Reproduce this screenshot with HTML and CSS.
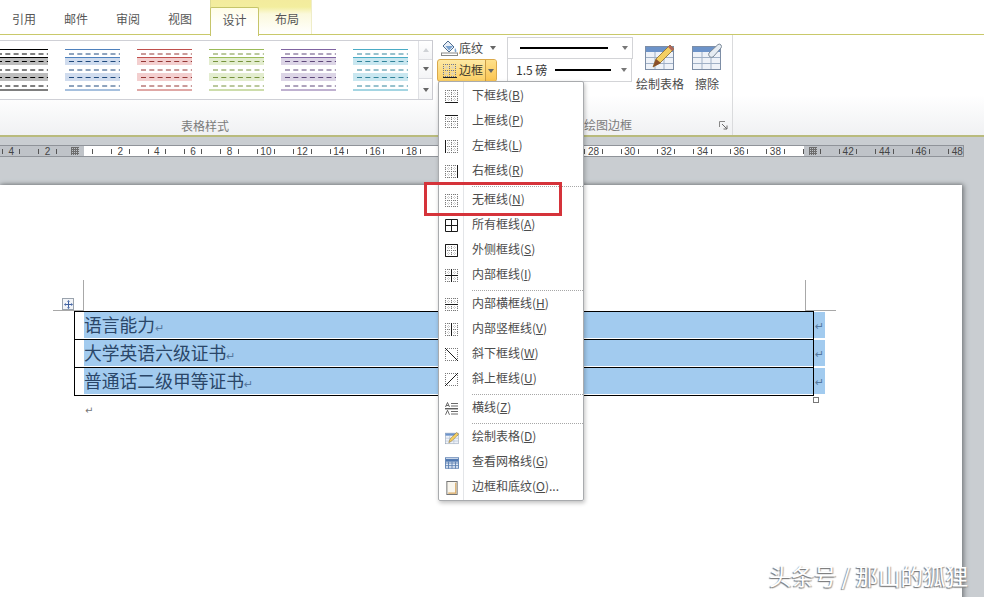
FILE: index.html
```html
<!DOCTYPE html>
<html lang="zh-CN">
<head>
<meta charset="utf-8">
<title>表格工具 - 边框</title>
<link rel="stylesheet" href="styles.css">
</head>
<body>
<svg class="defs" width="0" height="0" aria-hidden="true">
  <defs>
    <symbol id="thumb" viewBox="0 0 55 42">
      <rect class="band" x="0" y="8" width="55" height="8"/>
      <rect class="band" x="0" y="24" width="55" height="8"/>
      <path class="rule" d="M0 .5H55M0 8.5H55M0 41H55"/>
      <path class="dash" d="M4 5H55M4 12.5H55M4 21H55M4 28.5H55M4 37H55"/>
    </symbol>
    <symbol id="grid" viewBox="0 0 13 13">
      <path class="dots" d="M0 .5H13M0 6.500H13M0 12.500H13M.5 0V13M6.500 0V13M12.500 0V13"/>
      <path class="dots dots-faint" d="M0 3.500H13M0 9.500H13M3.500 0V13M9.500 0V13"/>
    </symbol>
    <symbol id="tableicon" viewBox="0 0 30 28">
      <rect x=".5" y="3.5" width="28" height="23" fill="#eef2f8" stroke="#7d8ea6"/>
      <rect x="1" y="4" width="27" height="5" fill="#6c93c9"/>
      <path d="M10 9V26M19 9V26M1 14.5H28M1 20.5H28" stroke="#9fb0c6" fill="none"/>
    </symbol>
  </defs>
</svg>

<header class="tabs">
  <div class="tab">引用</div>
  <div class="tab">邮件</div>
  <div class="tab">审阅</div>
  <div class="tab">视图</div>
  <div class="context">
    <div class="tab tab-active">设计</div>
    <div class="tab tab-last">布局</div>
  </div>
</header>

<section class="ribbon">
  <div class="group group-styles">
    <div class="gallery">
      <div class="thumbs">
        <svg class="thumb t-black"><use href="#thumb"/></svg>
        <svg class="thumb t-blue"><use href="#thumb"/></svg>
        <svg class="thumb t-red"><use href="#thumb"/></svg>
        <svg class="thumb t-green"><use href="#thumb"/></svg>
        <svg class="thumb t-purple"><use href="#thumb"/></svg>
        <svg class="thumb t-cyan"><use href="#thumb"/></svg>
      </div>
      <div class="scroller">
        <div class="scroll-btn"><span class="tri tri-faint"></span></div>
        <div class="scroll-btn"><span class="tri"></span></div>
        <div class="scroll-btn scroll-more"><span class="tri"></span></div>
      </div>
    </div>
    <div class="group-label">表格样式</div>
  </div>

  <div class="group group-draw">
    <div class="draw-top">
      <div class="col-format">
        <div class="fmt-row">
          <svg class="fmt-icon" viewBox="0 0 17 16">
            <path d="M7 1l6 6-5 5-6-6z" fill="#e8eef6" stroke="#4d6c8f"/>
            <path d="M4.500 6h7.500l-4 4.500z" fill="#7aa3d0"/>
            <path d="M14 8c1 1.500 2 3 1 4s-2-1-1-4z" fill="#7aa3d0"/>
            <rect x=".5" y="13" width="16" height="2.500" fill="#fff" stroke="#888"/>
          </svg>
          <span>底纹</span>
          <span class="tri tri-fmt"></span>
        </div>
        <div class="border-btn">
          <svg class="bd-icon" viewBox="0 0 14 14"><use href="#grid" width="13" height="13"/><path d="M0 13.500H14" stroke="#222" fill="none"/></svg>
          <span>边框</span>
          <span class="border-split"><span class="tri"></span></span>
        </div>
      </div>
      <div class="col-lines">
        <div class="line-box">
          <span class="line line-long"></span>
          <span class="tri"></span>
        </div>
        <div class="line-box line-box-weight">
          <span class="weight">1.5 磅</span>
          <span class="line line-short"></span>
          <span class="tri"></span>
        </div>
      </div>
      <div class="big-btn big-draw">
        <svg class="big-icon" viewBox="0 0 30 28">
          <use href="#tableicon" width="30" height="28"/>
          <path d="M8 24l3-8L25 2l4 4-14 14z" fill="#f4cf62" stroke="#8a6a2a" stroke-width=".8"/>
          <path d="M25 2l4 4-2 2-4-4z" fill="#b0675f"/>
          <path d="M8 24l3-8 5 4z" fill="#8a4f2a"/>
        </svg>
        <span>绘制表格</span>
      </div>
      <div class="big-btn big-erase">
        <svg class="big-icon" viewBox="0 0 30 28">
          <use href="#tableicon" width="30" height="28"/>
          <path d="M17 10L26 1.500q2-1 3 .5t0 3L21 14q-2 1-3.500-.5T17 10z" fill="#e6ecf2" stroke="#7c8a99"/>
        </svg>
        <span>擦除</span>
      </div>
    </div>
    <div class="draw-foot">
      <span class="group-label-inline">绘图边框</span>
      <svg class="launcher" viewBox="0 0 9 9"><path d="M.5 .5H6M.5 .5V6" stroke="#888" fill="none"/><path d="M3 3l5 5M8 4.500V8H4.500" stroke="#6b6b6b" fill="none"/></svg>
    </div>
  </div>
</section>

<div class="ruler-band">
  <div class="ruler">
    <span class="rcell">4</span><span class="rcell">2</span><span class="rcell rcell-blank"></span><span class="rcell">2</span><span class="rcell">4</span><span class="rcell">6</span><span class="rcell">8</span><span class="rcell">10</span><span class="rcell">12</span><span class="rcell">14</span><span class="rcell">16</span><span class="rcell">18</span><span class="rcell rcell-blank"></span><span class="rcell rcell-blank"></span><span class="rcell rcell-blank"></span><span class="rcell rcell-blank"></span><span class="rcell">28</span><span class="rcell">30</span><span class="rcell">32</span><span class="rcell">34</span><span class="rcell">36</span><span class="rcell">38</span><span class="rcell rcell-blank"></span><span class="rcell">42</span><span class="rcell">44</span><span class="rcell">46</span><span class="rcell">48</span>
    <span class="rmark rmark-left"></span>
    <span class="rmark rmark-right"></span>
  </div>
</div>

<main class="workspace">
  <article class="page">
    <div class="table-wrap">
      <span class="crop crop-lv"></span><span class="crop crop-lh"></span>
      <span class="crop crop-rv"></span><span class="crop crop-rh"></span>
      <span class="move-handle">
        <svg viewBox="0 0 9 9"><path d="M4.500 0L6 1.800H3zM4.500 9L6 7.200H3zM0 4.500L1.800 3V6zM9 4.500L7.200 3V6z" fill="#3d5fa0"/><path d="M4.500 1.500V7.500M1.500 4.500H7.500" stroke="#3d5fa0"/></svg>
      </span>
      <div class="doc-table">
        <div class="doc-row"><div class="doc-cell">语言能力<span class="pil">↵</span></div><div class="row-end"><span class="pil">↵</span></div></div>
        <div class="doc-row"><div class="doc-cell">大学英语六级证书<span class="pil">↵</span></div><div class="row-end"><span class="pil">↵</span></div></div>
        <div class="doc-row"><div class="doc-cell">普通话二级甲等证书<span class="pil">↵</span></div><div class="row-end"><span class="pil">↵</span></div></div>
      </div>
      <span class="resize-handle"></span>
    </div>
    <p class="after-para">↵</p>
  </article>
</main>

<nav class="menu">
  <div class="mi"><svg class="mi-icon" viewBox="0 0 13 13"><use href="#grid" width="13" height="13"/><path class="solid" d="M0 12.500H13"/></svg><span>下框线(<u>B</u>)</span></div>
  <div class="mi"><svg class="mi-icon" viewBox="0 0 13 13"><use href="#grid" width="13" height="13"/><path class="solid" d="M0 .5H13"/></svg><span>上框线(<u>P</u>)</span></div>
  <div class="mi"><svg class="mi-icon" viewBox="0 0 13 13"><use href="#grid" width="13" height="13"/><path class="solid" d="M.5 0V13"/></svg><span>左框线(<u>L</u>)</span></div>
  <div class="mi"><svg class="mi-icon" viewBox="0 0 13 13"><use href="#grid" width="13" height="13"/><path class="solid" d="M12.500 0V13"/></svg><span>右框线(<u>R</u>)</span></div>
  <div class="msep"></div>
  <div class="mi"><svg class="mi-icon" viewBox="0 0 13 13"><use href="#grid" width="13" height="13"/></svg><span>无框线(<u>N</u>)</span></div>
  <div class="mi"><svg class="mi-icon" viewBox="0 0 13 13"><path class="solid" d="M.5 .5H12.500V12.500H.5zM6.500 0V13M0 6.500H13"/></svg><span>所有框线(<u>A</u>)</span></div>
  <div class="mi"><svg class="mi-icon" viewBox="0 0 13 13"><use href="#grid" width="13" height="13"/><path class="solid" d="M.5 .5H12.500V12.500H.5z"/></svg><span>外侧框线(<u>S</u>)</span></div>
  <div class="mi"><svg class="mi-icon" viewBox="0 0 13 13"><use href="#grid" width="13" height="13"/><path class="solid" d="M6.500 0V13M0 6.500H13"/></svg><span>内部框线(<u>I</u>)</span></div>
  <div class="msep"></div>
  <div class="mi"><svg class="mi-icon" viewBox="0 0 13 13"><use href="#grid" width="13" height="13"/><path class="solid" d="M0 6.500H13"/></svg><span>内部横框线(<u>H</u>)</span></div>
  <div class="mi"><svg class="mi-icon" viewBox="0 0 13 13"><use href="#grid" width="13" height="13"/><path class="solid" d="M6.500 0V13"/></svg><span>内部竖框线(<u>V</u>)</span></div>
  <div class="mi"><svg class="mi-icon" viewBox="0 0 13 13"><path class="dots" d="M0 .5H13M.5 0V13M0 12.500H13M12.500 0V13"/><path class="solid" d="M0 0L13 13"/></svg><span>斜下框线(<u>W</u>)</span></div>
  <div class="mi"><svg class="mi-icon" viewBox="0 0 13 13"><path class="dots" d="M0 .5H13M.5 0V13M0 12.500H13M12.500 0V13"/><path class="solid" d="M0 13L13 0"/></svg><span>斜上框线(<u>U</u>)</span></div>
  <div class="msep"></div>
  <div class="mi"><svg class="mi-icon" viewBox="0 0 13 13"><path class="solid thin" d="M6 1.500H13M6 4H13M6 9.500H13M6 12H13"/><path class="solid" d="M0 6.800H13"/><path class="solid thin" d="M.5 5L2.500 .5 4.500 5M1.300 3.500H3.700M.5 12.800L2.500 8.300 4.500 12.800"/></svg><span>横线(<u>Z</u>)</span></div>
  <div class="msep"></div>
  <div class="mi"><svg class="mi-icon mi-icon-lg" viewBox="0 0 30 28"><use href="#tableicon" width="30" height="28"/><path d="M8 24l3-8L25 2l4 4-14 14z" fill="#f4cf62" stroke="#8a6a2a"/></svg><span>绘制表格(<u>D</u>)</span></div>
  <div class="mi"><svg class="mi-icon mi-icon-lg" viewBox="0 0 16 13"><rect x=".5" y=".5" width="15" height="12" fill="#dfe8f5" stroke="#5a7fb0"/><path d="M1 3.500H15" stroke="#4d76b0" stroke-width="3"/><path d="M.5 6.500H15.500M.5 9.500H15.500M4 5V13M8 5V13M12 5V13" stroke="#5a7fb0" fill="none"/></svg><span>查看网格线(<u>G</u>)</span></div>
  <div class="mi"><svg class="mi-icon mi-icon-lg" viewBox="0 0 14 15"><rect x="1.500" y=".5" width="11" height="14" fill="#f9f6ee" stroke="#6d6d6d"/><path d="M11 2V13H3" stroke="#d9a860" stroke-width="1.200" fill="none"/></svg><span>边框和底纹(<u>O</u>)...</span></div>
</nav>

<div class="callout"></div>
<div class="watermark">头条号 / 那山的狐狸</div>
</body>
</html>
```

FILE: styles.css
```css
* { box-sizing: border-box; }
html, body { margin: 0; padding: 0; }
body {
  position: relative;
  width: 984px;
  height: 597px;
  overflow: hidden;
  display: flex;
  flex-direction: column;
  background: #c9cdd1;
  color: #4a4a4a;
  font: 12px/1.2 "Noto Sans CJK SC", "Liberation Sans", sans-serif;
}
.defs { position: absolute; }

/* Tabs */
.tabs {
  flex: none;
  height: 35px;
  display: flex;
  padding-left: 0;
  background: #fff;
  border-bottom: 1px solid #c9c96a;
}
.tab {
  flex: none;
  width: 52px;
  height: 34px;
  padding-top: 12px;
  text-align: center;
  color: #565656;
}
.tab:first-child { margin-left: -2px; }
.context {
  flex: none;
  display: flex;
  margin-left: 4px;
  width: 102px;
  height: 34px;
  background: linear-gradient(#f3eb9d 0, #f3ee9e 7px, #fbf9dc 14px, #fff 34px);
  border-right: 1px solid #efedc8;
  border-left: 1px solid #dedb96;
}
.tab.tab-active {
  position: relative;
  width: 49px;
  height: 29px;
  margin-top: 7px;
  margin-left: -1px;
  padding-top: 5px;
  background: linear-gradient(#fffde6, #fff 60%);
  border: 1px solid #c6c56a;
  border-bottom: 0;
  border-radius: 2px 2px 0 0;
}
.tab-last { width: 56px; }

/* Ribbon */
.ribbon {
  flex: none;
  height: 102px;
  display: flex;
  background: linear-gradient(#fff 0, #fff 60px, #f0f1f3 100px);
  border-bottom: 2px solid #b9bb7d;
}
.group { display: flex; flex-direction: column; }
.group-styles { width: 433px; }
.gallery {
  display: flex;
  height: 60px;
  margin-top: 5px;
  background: #fff;
  border-top: 1px solid #cfd0d6;
  border-bottom: 1px solid #cfd0d6;
  border-right: 1px solid #c9c9cf;
}
.thumbs {
  flex: 1;
  display: flex;
  gap: 17px;
  padding-top: 8px;
  margin-left: -7px;
  min-width: 0;
}
.thumb { flex: none; width: 55px; height: 42px; }
.band { fill: var(--band); }
.rule { fill: none; stroke: var(--line); stroke-width: 1; }
.dash { fill: none; stroke: var(--dash); stroke-width: 1; stroke-dasharray: 5 3.300; }
.t-black  { --band: #bdbdbd; --line: #000;    --dash: #000; }
.t-blue   { --band: #d0dcee; --line: #4f81bd; --dash: #1f497d; }
.t-red    { --band: #f3cfcf; --line: #c0504d; --dash: #943634; }
.t-green  { --band: #e3edcf; --line: #9bbb59; --dash: #76923c; }
.t-purple { --band: #dcd5e6; --line: #8064a2; --dash: #5f497a; }
.t-cyan   { --band: #c9e7f0; --line: #4bacc6; --dash: #31849b; }
.scroller {
  flex: none;
  width: 14px;
  display: flex;
  flex-direction: column;
  border-left: 1px solid #dfe0e4;
}
.scroll-btn {
  flex: 1;
  display: flex;
  align-items: center;
  justify-content: center;
  border-bottom: 1px solid #dcdde1;
  background: linear-gradient(#fff, #f3f4f6);
}
.scroll-btn:last-child { border-bottom: 0; }
.scroll-more { padding-top: 2px; }
.tri {
  display: inline-block;
  width: 0;
  height: 0;
  border-left: 3.500px solid transparent;
  border-right: 3.500px solid transparent;
  border-top: 4px solid #666;
}
.tri-faint {
  border-top: 0;
  border-bottom: 4px solid #cfd2d6;
}
.group-label {
  margin-top: 19px;
  text-align: center;
  width: 410px;
  color: #7b7b7b;
}

.group-draw {
  width: 300px;
  border-right: 1px solid #dadbdd;
}
.draw-top {
  display: flex;
  height: 79px;
  padding: 2px 0 0 4px;
}
.col-format { width: 60px; display: flex; flex-direction: column; }
.fmt-row {
  height: 22px;
  display: flex;
  align-items: center;
  padding-left: 4px;
  gap: 1px;
}
.fmt-icon { width: 17px; height: 16px; }
.tri-fmt { margin-left: 6px; }
.border-btn {
  height: 23px;
  display: flex;
  align-items: center;
  padding-left: 5px;
  color: #3e3a2c;
  background: linear-gradient(#fde9a4, #fcd065);
  border: 1px solid #dba94a;
  border-radius: 3px;
}
.bd-icon { width: 14px; height: 14px; margin-right: 2px; }
.border-split {
  margin-left: 2px;
  flex: 1;
  height: 100%;
  display: flex;
  align-items: center;
  justify-content: center;
  border-left: 1px solid #c99c46;
  background: linear-gradient(#fee08a, #fbc552);
  border-radius: 0 2px 2px 0;
}
.col-lines { width: 126px; margin-left: 10px; display: flex; flex-direction: column; }
.line-box {
  height: 22px;
  display: flex;
  align-items: center;
  background: #fff;
  border: 1px solid #d3d4d7;
  padding-left: 12px;
}
.line-box .tri { margin-left: 14px; border-top-color: #777; }
.line { display: block; height: 2px; background: #000; }
.line-long { width: 88px; }
.line-box-weight {
  height: 23px;
  width: 125px;
  padding-left: 8px;
  border-top: 0;
  background: #fff;
}
.weight { width: 39px; color: #333; font-size: 12px; }
.line-short { width: 56px; }
.line-box-weight .tri { margin-left: 10px; }
.big-btn {
  display: flex;
  flex-direction: column;
  align-items: center;
  padding-top: 6px;
}
.big-draw { width: 48px; margin-left: 3px; }
.big-erase { width: 30px; margin-left: 8px; }
.big-icon { width: 30px; height: 28px; margin-bottom: 6px; flex: none; }
.big-btn span { white-space: nowrap; }
.draw-foot {
  display: flex;
  align-items: center;
  justify-content: flex-end;
  height: 19px;
  padding-right: 4px;
  margin-top: 3px;
  color: #7b7b7b;
}
.group-label-inline { margin-right: 87px; }
.launcher { width: 9px; height: 9px; }

/* Ruler */
.ruler-band { flex: none; height: 48px; padding-top: 8px; }
.ruler {
  position: relative;
  display: flex;
  width: 964px;
  height: 12px;
  overflow: hidden;
  border-top: 1px solid #8f9399;
  border-bottom: 1px solid #8f9399;
  border-right: 1px solid #8f9399;
  background: linear-gradient(to right, #bfc3c8 84px, #fff 84px, #fff 804px, #bfc3c8 804px);
}
.rcell {
  flex: none;
  width: 36.400px;
  position: relative;
  text-align: center;
  font: 10px/11px "Liberation Sans", sans-serif;
  color: #444;
}
.rcell:first-child { margin-left: -7px; }
.rcell::before, .rcell::after {
  content: "";
  position: absolute;
  top: 3px;
  width: 1px;
  height: 5px;
  background: #555;
}
.rcell::before { left: 9px; }
.rcell::after { right: 9px; }
.rmark {
  position: absolute;
  top: 1px;
  width: 8px;
  height: 8px;
  background:
    repeating-linear-gradient(to right, #6d6d6d 0 1px, transparent 1px 2px),
    repeating-linear-gradient(to bottom, #6d6d6d 0 1px, transparent 1px 2px);
}
.rmark-left { left: 71px; }
.rmark-right { left: 809px; }

/* Document */
.workspace { flex: 1; min-height: 0; }
.page {
  position: relative;
  width: 962px;
  height: 440px;
  padding-top: 126px;
  background: #fff;
  box-shadow: 2px 0 5px #7d8084, 0 -1px 3px #9a9da1;
}
.table-wrap { position: relative; margin-left: 74px; width: 752px; }
.crop { position: absolute; background: #a8a8a8; }
.crop-lv { left: 9px; top: -31px; width: 1px; height: 31px; }
.crop-lh { left: -21px; top: -1px; width: 31px; height: 1px; }
.crop-rv { left: 731px; top: -31px; width: 1px; height: 31px; }
.crop-rh { left: 731px; top: -1px; width: 31px; height: 1px; }
.move-handle {
  position: absolute;
  left: -12px;
  top: -13px;
  width: 12px;
  height: 12px;
  display: flex;
  align-items: center;
  justify-content: center;
  background: #f2f4f8;
  border: 1px solid #9aa3ad;
}
.move-handle svg { width: 9px; height: 9px; }
.doc-row {
  display: flex;
  height: 28px;
}
.doc-cell {
  width: 740px;
  padding-left: 9px;
  border: 1px solid #000;
  border-bottom: 0;
  font-size: 17.800px;
  line-height: 25px;
  color: #2a4668;
  background: linear-gradient(#a2cbef, #a2cbef) no-repeat 9px 0 / calc(100% - 9px) calc(100% - 1px);
  white-space: nowrap;
}
.doc-row:last-child { height: 29px; }
.doc-row:last-child .doc-cell { border-bottom: 1px solid #000; }
.row-end {
  width: 11px;
  height: 26px;
  margin-top: 1px;
  background: #a2cbef;
  text-align: center;
  line-height: 26px;
}
.pil {
  font: 11px/1 "DejaVu Sans", sans-serif;
  color: #55789e;
}
.resize-handle {
  position: absolute;
  left: 739px;
  top: 86px;
  width: 6px;
  height: 6px;
  background: #fff;
  border: 1px solid #777;
}
.after-para {
  margin: 9px 0 0 85px;
  font: 10px/12px "DejaVu Sans", sans-serif;
  color: #777;
}

/* Menu */
.menu {
  position: absolute;
  left: 438px;
  top: 81px;
  width: 146px;
  height: 420px;
  padding-top: 2px;
  background: linear-gradient(to right, #fff 24px, #e3e5e8 24px, #e3e5e8 25px, #fff 25px);
  border: 1px solid #a9abae;
  border-radius: 2px;
  box-shadow: 1px 2px 4px rgba(0, 0, 0, .25);
}
.mi {
  display: flex;
  align-items: center;
  height: 25px;
  padding-left: 6px;
  color: #4c4c4c;
  white-space: nowrap;
}
.mi span { margin-top: -2px; }
.mi-icon { flex: none; width: 13px; height: 13px; margin-right: 14px; }
.mi-icon-lg { width: 14px; height: 14px; margin-right: 13px; }
.dots { fill: none; stroke: #7a7a7a; stroke-width: 1; stroke-dasharray: 1 1; }
.dots-faint { stroke: #cfcfcf; }
.solid { fill: none; stroke: #1a1a1a; stroke-width: 1; }
.thin { stroke: #444; stroke-width: .8; }
.msep {
  height: 4px;
  margin-left: 33px;
  border-top: 1px dotted #a7a7a7;
  position: relative;
  top: 2px;
}

/* Overlays */
.callout {
  position: absolute;
  left: 424px;
  top: 182px;
  width: 138px;
  height: 34px;
  border: 3px solid #d5333a;
}
.watermark {
  position: absolute;
  left: 769px;
  top: 560px;
  font-size: 22.500px;
  line-height: 30px;
  white-space: nowrap;
  color: #fff;
  text-shadow: -1px 1px 1px #777, 1px 1px 1px #aaa;
}
```
